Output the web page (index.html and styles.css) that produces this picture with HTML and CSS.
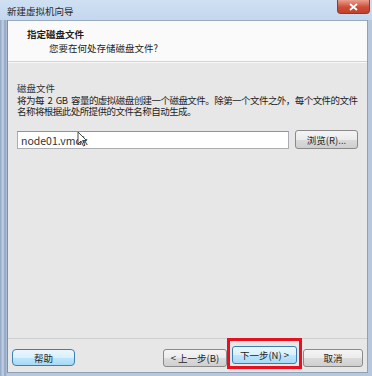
FILE: index.html
```html
<!DOCTYPE html>
<html lang="zh-CN">
<head>
    <meta charset="UTF-8">
    <title>新建虚拟机向导</title>
    <link rel="stylesheet" href="styles.css">
</head>
<body>
    <div class="window">
        <div class="titlebar">
            <span class="title">新建虚拟机向导</span>
            <span class="close">
                <svg width="9" height="8" viewBox="0 0 9 8"><path d="M1 1 L8 7 M8 1 L1 7" stroke="#fff" stroke-width="1.8"/></svg>
            </span>
        </div>
        <div class="frame">
            <div class="client">
                <div class="header">
                    <div class="header-title">指定磁盘文件</div>
                    <div class="header-sub">您要在何处存储磁盘文件?</div>
                </div>
                <div class="content">
                    <div class="group-label">磁盘文件</div>
                    <p class="desc">将为每 2 GB 容量的虚拟磁盘创建一个磁盘文件。除第一个文件之外，每个文件的文件<br>名称将根据此处所提供的文件名称自动生成。</p>
                    <div class="file-row">
                        <div class="input">node01.vmdk
                            <svg class="cursor" width="10" height="17" viewBox="0 0 10 17">
                                <path d="M1 1 L1 13 L4 10 L6.5 15 L8 14.3 L5.6 9.5 L9.5 9.5 Z" fill="#fff" stroke="#333" stroke-width="0.9"/>
                            </svg>
                        </div>
                        <button class="btn browse">浏览(R)...</button>
                    </div>
                </div>
                <div class="footer">
                    <button class="btn btn-blue help">帮助</button>
                    <div class="nav">
                        <button class="btn prev">&lt; 上一步(B)</button>
                        <div class="highlight">
                            <button class="btn btn-blue next">下一步(N) &gt;</button>
                        </div>
                        <button class="btn cancel">取消</button>
                    </div>
                </div>
            </div>
        </div>
    </div>
</body>
</html>
```

FILE: styles.css
```css
* {
    box-sizing: border-box;
}
html, body {
    margin: 0;
    padding: 0;
}
body {
    width: 372px;
    height: 376px;
    overflow: hidden;
    font-family: "Noto Sans CJK SC", "Liberation Sans", sans-serif;
    font-size: 9.5px;
    color: #1e1e1e;
    background: #b9cbe2;
}
.window {
    height: 376px;
    display: flex;
    flex-direction: column;
    background: linear-gradient(to bottom, #c6d9ee, #b8cbe3 40%, #aebfd8);
}
.titlebar {
    height: 20px;
    display: flex;
    align-items: flex-start;
    justify-content: space-between;
    padding-left: 7px;
    background: linear-gradient(to bottom, #cfe0f2, #c3d7ee);
}
.title {
    font-size: 9.5px;
    line-height: 22px;
    color: #2a2a2a;
}
.close {
    width: 33px;
    height: 14px;
    margin-right: 2px;
    display: flex;
    align-items: center;
    justify-content: center;
    border: 1px solid #8e3b2e;
    border-top: none;
    border-radius: 0 0 4px 4px;
    background: linear-gradient(to bottom, #e9a08f, #cd4d37 55%, #c2412b);
}
.frame {
    flex: 1;
    display: flex;
    padding: 0 4px 3px 7px;
    background: linear-gradient(to right, #90a5c2, #c3d3e8 3px, #8ea2bf 5px, #b7c8de 7px);
}
.client {
    flex: 1;
    min-width: 0;
    display: flex;
    flex-direction: column;
    overflow: hidden;
    background: #e7e7e7;
    border-left: 1px solid #7f8fa6;
    border-right: 1px solid #8fa0b8;
    border-bottom: 1px solid #8fa0b8;
}
.header {
    height: 42px;
    padding: 6px 0 0 19px;
    background: #fafafa;
    border-top: 1px solid #9aaabf;
    border-bottom: 1px solid #d2d2d2;
}
.header-title {
    font-weight: bold;
    line-height: 14px;
}
.header-sub {
    padding-left: 22px;
    line-height: 14px;
}
.content {
    flex: 1;
    padding: 19px 8px 0 9px;
    border-top: 1px solid #f8f8f8;
}
.group-label {
    line-height: 12px;
    margin-bottom: 1px;
    color: #333;
}
.desc {
    margin: 0;
    line-height: 11px;
    letter-spacing: -0.55px;
    word-spacing: 2px;
    white-space: nowrap;
}
.file-row {
    display: flex;
    align-items: center;
    gap: 6px;
    margin-top: 13px;
}
.input {
    position: relative;
    width: 272px;
    height: 18px;
    padding-left: 3px;
    font-size: 10.5px;
    line-height: 17px;
    background: #fff;
    border: 1px solid #abadb3;
    border-top-color: #8f9297;
    color: #333;
}
.cursor {
    position: absolute;
    left: 59px;
    top: -1px;
}
.btn {
    font-family: inherit;
    font-size: 9.5px;
    height: 18px;
    padding: 0;
    color: #1e1e1e;
    border: 1px solid #8a8a8a;
    border-radius: 3px;
    background: linear-gradient(to bottom, #f4f4f4, #ebebeb 50%, #dbdbdb 51%, #cfcfcf);
}
.browse {
    width: 63px;
    height: 19px;
}
.btn-blue {
    border-color: #3c7fb1;
    background: linear-gradient(to bottom, #eaf6fd, #d9f0fc 50%, #bee6fd 51%, #a7d9f5);
}
.footer {
    height: 34px;
    display: flex;
    align-items: center;
    justify-content: space-between;
    padding: 0 4px 0 4px;
    border-top: 1px solid #cfcfcf;
}
.help {
    width: 63px;
    height: 17px;
    margin-top: 4px;
    border-radius: 4px;
}
.nav {
    display: flex;
    align-items: center;
    margin-top: 4px;
}
.prev {
    width: 64px;
}
.next {
    width: 65px;
}
.cancel {
    width: 60px;
}
.highlight {
    border: 3px solid #e8101e;
    padding: 5px 2px 2px 2px;
    margin: -9px 1px 0 0;
}
```
